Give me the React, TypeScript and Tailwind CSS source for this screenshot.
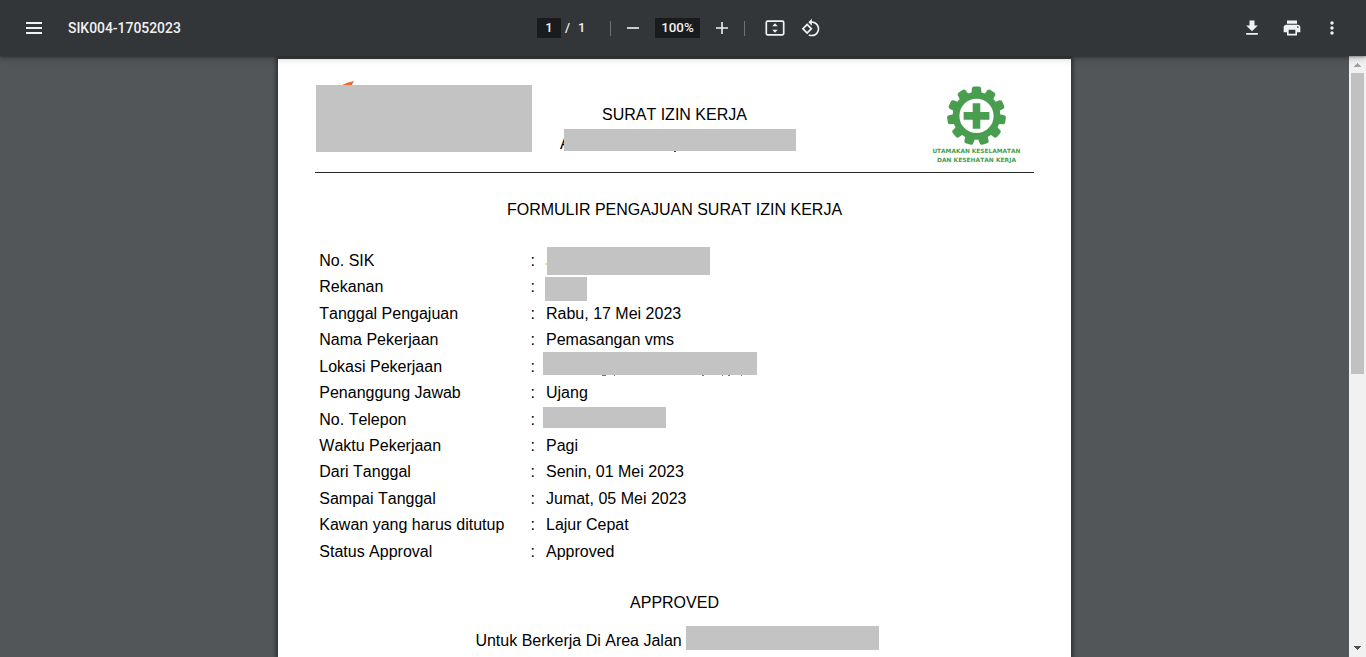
import React from "react";

type Row = { label: string; value?: string; cover?: string; marks?: React.ReactNode };

const rows: Row[] = [
  {
    label: "No. SIK",
    cover: "left-[1px] -top-[0.8px] h-[28px] w-[163px]",
    marks: <span className="absolute -left-px top-[15px] h-[2px] w-[2px] bg-[#f5dfae]" />,
  },
  { label: "Rekanan", cover: "-left-px top-[2.7px] h-[24px] w-[42px]" },
  { label: "Tanggal Pengajuan", value: "Rabu, 17 Mei 2023" },
  { label: "Nama Pekerjaan", value: "Pemasangan vms" },
  {
    label: "Lokasi Pekerjaan",
    cover: "-left-[3px] -top-[1.8px] h-[23px] w-[214px]",
    marks: (
      <svg className="absolute left-0 top-[21.2px]" width="210" height="1" stroke="#777" strokeWidth="1">
        <path d="M56 .5h4M68 .5h1M156 .5h2M176 .5h1M182 .5h2M195 .5h1" />
      </svg>
    ),
  },
  { label: "Penanggung Jawab", value: "Ujang" },
  { label: "No. Telepon", cover: "-left-[3px] top-[0.2px] h-[21px] w-[123px]" },
  { label: "Waktu Pekerjaan", value: "Pagi" },
  { label: "Dari Tanggal", value: "Senin, 01 Mei 2023" },
  { label: "Sampai Tanggal", value: "Jumat, 05 Mei 2023" },
  { label: "Kawan yang harus ditutup", value: "Lajur Cepat" },
  { label: "Status Approval", value: "Approved" },
];

function Icon({ d }: { d: string }) {
  return (
    <svg viewBox="0 0 24 24" className="block size-5 shrink-0" fill="#f1f1f1">
      <path d={d} />
    </svg>
  );
}

function Toolbar() {
  return (
    <header className="relative z-10 flex h-14 shrink-0 items-center bg-[#323639] font-['Roboto',sans-serif] text-[13px] font-medium text-[#f1f1f1] shadow-[0_-2px_8px_rgba(0,0,0,0.09),0_4px_8px_rgba(0,0,0,0.06),0_1px_2px_rgba(0,0,0,0.3),0_2px_6px_rgba(0,0,0,0.15)]">
      <div className="flex w-[537px] items-center gap-[26px] pl-[26px]">
        <svg width="16" height="12" fill="#f1f1f1" shapeRendering="crispEdges">
          <path d="M0 0h16v2H0zM0 5h16v2H0zM0 10h16v2H0z" />
        </svg>
        <span className="text-[13.92px] leading-5">SIK004-17052023</span>
      </div>
      <div className="flex w-[703px] items-center">
        <span className="flex h-5 w-6 items-center justify-center bg-[#191b1c]">1</span>
        <span className="ml-1 w-[6px]">/</span>
        <span className="ml-[7px] w-2">1</span>
        <span className="ml-[24px] h-[15px] w-px bg-[#6f7274]" />
        <svg className="ml-4" width="12" height="12" fill="#f1f1f1">
          <path d="M0 5.2h12v1.6H0z" />
        </svg>
        <span className="ml-4 flex h-5 w-[45px] items-center justify-center bg-[#191b1c] text-[13.4px]">100%</span>
        <svg className="ml-4" width="12" height="12" fill="#f1f1f1">
          <path d="M5.2 0h1.6v5.2H12v1.6H6.8V12H5.2V6.8H0V5.2h5.2z" />
        </svg>
        <span className="ml-4 h-[15px] w-px bg-[#6f7274]" />
        <svg className="ml-5" width="20" height="16" fill="none">
          <rect x="1.3" y="1.2" width="17.4" height="13.6" rx="1.2" stroke="#f1f1f1" strokeWidth="1.7" />
          <path d="M7.3 6.3 10 3.2l2.7 3.1zM7.3 9.7h5.4L10 12.8z" fill="#f1f1f1" />
        </svg>
        <span className="ml-4">
          <Icon d="M7.34 6.41L.86 12.9l6.49 6.48 6.49-6.48-6.5-6.49zM3.69 12.9l3.66-3.66L11 12.9l-3.66 3.66-3.65-3.66zm15.67-6.26C17.61 4.88 15.3 4 13 4V.76L8.76 5 13 9.24V6c1.79 0 3.58.68 4.95 2.05 2.73 2.73 2.73 7.17 0 9.9C16.58 19.32 14.79 20 13 20c-.97 0-1.94-.21-2.84-.61l-1.49 1.49C10.02 21.62 11.51 22 13 22c2.3 0 4.61-.88 6.36-2.64 3.52-3.51 3.52-9.21 0-12.72z" />
        </span>
      </div>
      <div className="flex gap-5 pl-[2px]">
        <Icon d="M19 9h-4V3H9v6H5l7 7 7-7zM5 18v2h14v-2H5z" />
        <Icon d="M19 8H5c-1.66 0-3 1.34-3 3v6h4v4h12v-4h4v-6c0-1.66-1.34-3-3-3zm-3 11H8v-5h8v5zm3-7c-.55 0-1-.45-1-1s.45-1 1-1 1 .45 1 1-.45 1-1 1zm-1-9H6v4h12V3z" />
        <Icon d="M12 8c1.1 0 2-.9 2-2s-.9-2-2-2-2 .9-2 2 .9 2 2 2zm0 2c-1.1 0-2 .9-2 2s.9 2 2 2 2-.9 2-2-.9-2-2-2zm0 6c-1.1 0-2 .9-2 2s.9 2 2 2 2-.9 2-2-.9-2-2-2z" />
      </div>
    </header>
  );
}

function SafetyLogo() {
  const teeth = Array.from({ length: 11 }, (_, i) => (i * 360) / 11);
  return (
    <svg width="92" height="80" viewBox="0 0 92 80" fill="#489e4e">
      <g transform="translate(45.5 30.9)">
        <circle r="20.5" fill="none" stroke="#489e4e" strokeWidth="6.8" />
        {teeth.map((a) => (
          <path key={a} transform={`rotate(${a})`} d="M-5 -22.5 L-4.6 -27.4 Q-4.3 -29.1 -2.6 -29.3 L2.6 -29.3 Q4.3 -29.1 4.6 -27.4 L5 -22.5z" />
        ))}
        <path d="M-3.8 -12.7h7.6v8.9h9.1v7.6H3.8v9h-7.6v-9h-9.1v-7.6h9.1z" />
      </g>
      <g fontFamily="DejaVu Sans, sans-serif" fontWeight="700" fontSize="5.7">
        <text x="1.4" y="68" textLength="88" lengthAdjust="spacingAndGlyphs">UTAMAKAN KESELAMATAN</text>
        <text x="6" y="77" textLength="79" lengthAdjust="spacingAndGlyphs">DAN KESEHATAN KERJA</text>
      </g>
    </svg>
  );
}

function DocumentPage() {
  return (
    <main className="h-[598px] w-[793px] shrink-0 overflow-hidden bg-white px-[37px] font-['Liberation_Sans',Arial,sans-serif] text-[16px] leading-[20px] text-black [font-kerning:none]">
      <div className="flex h-[114px] w-[719px] border-b border-[#262626]">
        <div className="w-[217px] pl-px pt-[22px]">
          <svg className="ml-[26px]" width="12" height="4">
            <path d="M0 4Q6 1 12 0L9.8 4z" fill="#ed6a2b" />
          </svg>
          <div className="h-[67px] w-[216px] bg-[#c3c3c3]" />
        </div>
        <div className="w-[285px] pt-[46px]">
          <div className="pl-[70px]">SURAT IZIN KERJA</div>
          <div className="relative mt-[8px] h-[22px] pl-[28px] leading-[22px]">
            <span>A</span>
            <span className="absolute left-[142px] top-[18px] h-px w-[2px] bg-[#444]" />
            <span className="absolute left-[32px] top-[-4px] h-[22px] w-[232px] bg-[#c3c3c3]" />
          </div>
        </div>
        <div className="pl-[114px] pt-[26px]">
          <SafetyLogo />
        </div>
      </div>
      <h1 className="mt-[27px] w-[719px] text-center">FORMULIR PENGAJUAN SURAT IZIN KERJA</h1>
      <dl className="mt-[27.93px] pl-[4.3px]">
        {rows.map((r) => (
          <div key={r.label} className="flex h-[26.44px] leading-[26.44px]">
            <dt className="w-[211.3px]">{r.label}</dt>
            <dd className="w-[15.4px]">:</dd>
            <dd className="relative">
              {r.value}
              {r.marks}
              {r.cover && <span className={`absolute bg-[#c3c3c3] ${r.cover}`} />}
            </dd>
          </div>
        ))}
      </dl>
      <div className="mt-[28.07px] w-[719px] text-center">APPROVED</div>
      <div className="mt-[13px] flex pl-[160px]">
        <span className="w-[211px] pl-[0.4px] pt-[5px]">Untuk Berkerja Di Area Jalan</span>
        <span className="h-[24px] w-[193px] bg-[#c3c3c3]" />
      </div>
    </main>
  );
}

function Scrollbar() {
  return (
    <aside className="flex w-[17px] shrink-0 flex-col items-center bg-[#f1f1f1]">
      <svg width="17" height="17" shapeRendering="crispEdges">
        <path d="M5 11h7v-1h-1V9h-1V8H9V7H8v1H7v1H6v1H5z" fill="#a3a3a3" />
      </svg>
      <div className="h-[301px] w-[13px] bg-[#c1c1c1]" />
      <svg className="mt-auto" width="17" height="17" shapeRendering="crispEdges">
        <path d="M5 6h7v1h-1v1h-1v1H9v1H8V9H7V8H6V7H5z" fill="#505050" />
      </svg>
    </aside>
  );
}

export default function App() {
  return (
    <div className="flex h-[657px] w-[1366px] flex-col overflow-hidden bg-[#525659]">
      <Toolbar />
      <div className="flex min-h-0 flex-1">
        <div className="flex flex-1 overflow-hidden pl-[278px] pt-[3px]">
          <div className="h-[598px] shadow-[0_0_4px_2px_rgba(0,0,0,0.45)]">
            <DocumentPage />
          </div>
        </div>
        <Scrollbar />
      </div>
    </div>
  );
}
